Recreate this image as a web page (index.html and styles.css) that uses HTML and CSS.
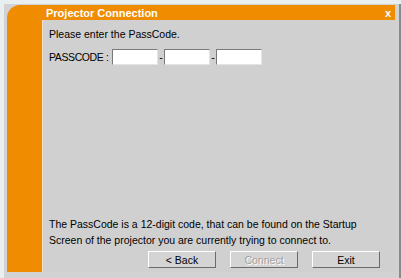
FILE: index.html
```html
<!DOCTYPE html>
<html>
<head>
<meta charset="utf-8">
<link rel="stylesheet" href="styles.css">
</head>
<body>
<div class="frame">
  <div class="window">
    <div class="side"></div>
    <div class="title">
      <span class="title-text">Projector Connection</span>
      <span class="close">x</span>
    </div>
    <div class="content">
      <p class="prompt">Please enter the PassCode.</p>
      <div class="code-row">
        <span class="label">PASSCODE :</span>
        <span class="box"></span>
        <span class="dash">-</span>
        <span class="box"></span>
        <span class="dash">-</span>
        <span class="box"></span>
      </div>
      <div class="spacer"></div>
      <p class="info">The PassCode is a 12-digit code, that can be found on the Startup<br>Screen of the projector you are currently trying to connect to.</p>
      <div class="buttons">
        <span class="btn">&lt; Back</span>
        <span class="btn disabled">Connect</span>
        <span class="btn">Exit</span>
      </div>
    </div>
  </div>
</div>
</body>
</html>
```

FILE: styles.css
```css
html, body {
  margin: 0;
  padding: 0;
}
body {
  width: 401px;
  height: 278px;
  background: #e9eeee;
  font-family: "Liberation Sans", Arial, sans-serif;
  font-size: 10.5px;
  color: #000;
  overflow: hidden;
}
.frame {
  box-sizing: border-box;
  margin: 4px 0 0 4px;
  width: 397px;
  height: 274px;
  background: #d2d2d2;
  border-right: 2px solid #8a8a8a;
  padding: 1px 4px 4px 3px;
}
.window {
  display: grid;
  grid-template-columns: 35px 1fr;
  grid-template-rows: 15px 1fr;
  height: 267px;
  background: #ef8c00;
  border-top-left-radius: 13px;
}
.side {
  grid-row: 1 / 3;
}
.title {
  display: flex;
  align-items: center;
  justify-content: space-between;
  padding: 0 4px 0 4px;
  color: #fff;
  font-weight: bold;
  font-size: 11px;
}
.close {
  font-size: 11px;
}
.content {
  background: #d0d0d0;
  border-left: 1px solid #f3e0c8;
  display: flex;
  flex-direction: column;
  padding: 8px 0 4px 6px;
}
.prompt {
  margin: 0;
  line-height: 13px;
}
.code-row {
  display: flex;
  align-items: center;
  margin-top: 8px;
  height: 16px;
}
.label {
  width: 63px;
  white-space: nowrap;
  letter-spacing: -0.4px;
}
.box {
  box-sizing: border-box;
  width: 46px;
  height: 16px;
  background: #fff;
  border-top: 1px solid #7a7a7a;
  border-left: 1px solid #7a7a7a;
  border-right: 1px solid #e4e4e4;
  border-bottom: 1px solid #e4e4e4;
}
.dash {
  width: 6px;
  text-align: center;
}
.spacer {
  flex: 1;
}
.info {
  margin: 0;
  line-height: 16px;
}
.buttons {
  display: flex;
  gap: 14px;
  margin: 3px 0 0 99px;
}
.btn {
  box-sizing: border-box;
  width: 68px;
  height: 17px;
  display: flex;
  align-items: center;
  justify-content: center;
  background: #d4d4d4;
  border-top: 1px solid #fff;
  border-left: 1px solid #fff;
  border-right: 1px solid #6a6a6a;
  border-bottom: 1px solid #6a6a6a;
}
.btn.disabled {
  color: #a2a2a2;
  text-shadow: 1px 1px 0 #fff;
}
```
